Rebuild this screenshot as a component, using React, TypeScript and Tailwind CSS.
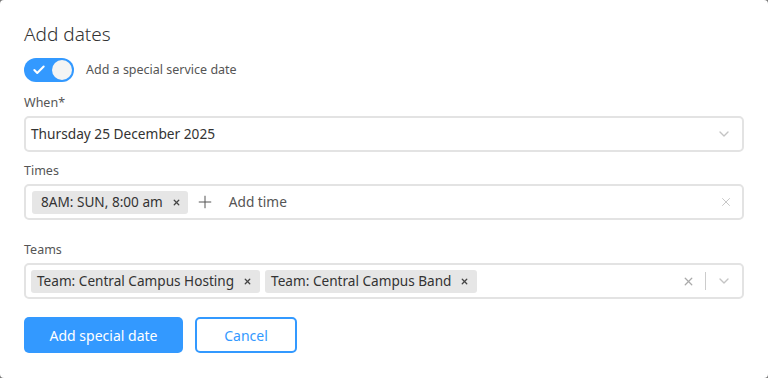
import { Check, ChevronDown, Plus, X } from "lucide-react";

const font = { fontFamily: '"Noto Sans", "Open Sans", Arial, sans-serif' };

function Chip({ label, pad }: { label: string; pad: string }) {
  return (
    <span
      className={`flex h-[23px] items-center rounded-[3px] bg-[#e6e6e6] text-[13.6px] text-[#333] ${pad}`}
    >
      {label}
      <X className="ml-[9px] size-[9px] text-[#444]" strokeWidth={3.5} />
    </span>
  );
}

function Label({ children }: { children: React.ReactNode }) {
  return (
    <div className="mb-[4px] text-[12.5px] leading-[18px] text-[#555]">
      {children}
    </div>
  );
}

export default function App() {
  return (
    <div className="h-[378px] w-[768px] bg-[#777]" style={font}>
      <div className="flex h-full flex-col rounded-[4px] bg-white px-6 pt-[21px]">
        <h2 className="text-[19px] leading-[26px] font-light text-[#333]">
          Add dates
        </h2>

        <div className="mt-[11px] flex items-center gap-3">
          <div className="flex h-[24px] w-[50px] items-center justify-between rounded-full bg-[#3399ff] pr-[2px] pl-[8px]">
            <Check className="size-[14px] text-white" strokeWidth={3.5} />
            <span className="size-[20px] rounded-full bg-[#f4f4f4]" />
          </div>
          <span className="text-[12.5px] text-[#555]">
            Add a special service date
          </span>
        </div>

        <div className="mt-[12px]">
          <Label>When*</Label>
          <div className="flex h-[36px] items-center rounded-[5px] border-2 border-[#e3e3e3] pr-[10px] pl-[5px]">
            <span className="flex-1 text-[13.7px] text-[#333]">
              Thursday 25 December 2025
            </span>
            <ChevronDown className="size-[16px] text-[#c4c4c4]" strokeWidth={2} />
          </div>
        </div>

        <div className="mt-[10px]">
          <Label>Times</Label>
          <div className="flex h-[36px] items-center rounded-[5px] border-2 border-[#e3e3e3] pr-[9px] pl-[6px]">
            <Chip label="8AM: SUN, 8:00 am" pad="pl-[9px] pr-[7px] h-[22px]" />
            <Plus className="mr-[14px] ml-[7px] size-[20px] text-[#555]" strokeWidth={1.2} />
            <span className="flex-1 text-[13.7px] text-[#555]">Add time</span>
            <X className="size-[14px] text-[#c4c4c4]" strokeWidth={1.6} />
          </div>
        </div>

        <div className="mt-[21px]">
          <Label>Teams</Label>
          <div className="flex h-[36px] items-center gap-[5px] rounded-[5px] border-2 border-[#e3e3e3] pr-[10px] pl-[5px]">
            <Chip label="Team: Central Campus Hosting" pad="pl-[6px] pr-[8px]" />
            <Chip label="Team: Central Campus Band" pad="pl-[6px] pr-[8px]" />
            <div className="flex-1" />
            <X className="size-[13px] text-[#aaa]" strokeWidth={2.4} />
            <span className="mx-[5px] h-[18px] w-px bg-[#ccc]" />
            <ChevronDown className="size-[16px] text-[#c4c4c4]" strokeWidth={2} />
          </div>
        </div>

        <div className="mt-[18px] flex gap-3">
          <button className="h-[36px] w-[159px] rounded-[5px] bg-[#3399ff] text-[14px] text-white">
            Add special date
          </button>
          <button className="h-[36px] w-[102px] rounded-[5px] border-2 border-[#3399ff] bg-white text-[14px] text-[#3399ff]">
            Cancel
          </button>
        </div>
      </div>
    </div>
  );
}
